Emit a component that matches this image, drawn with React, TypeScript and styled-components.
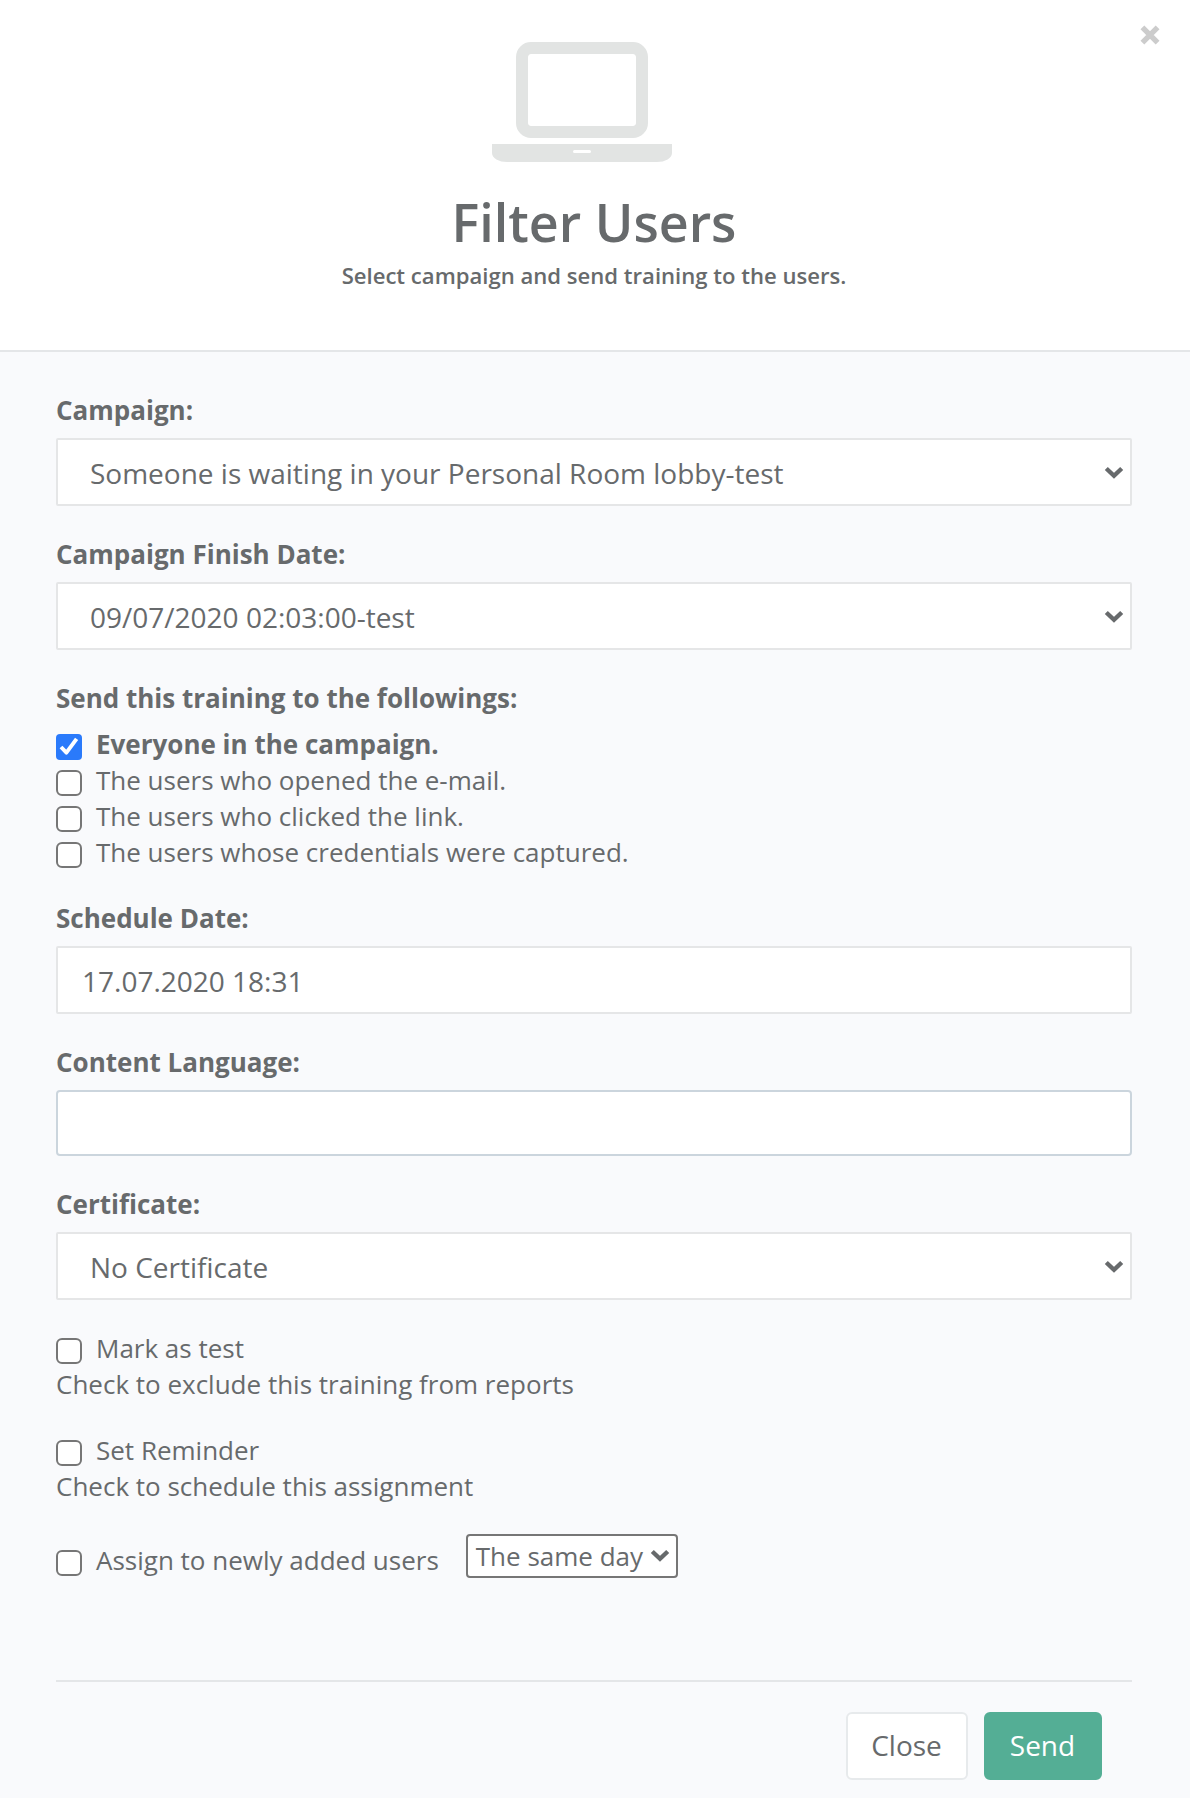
import React from "react";
import styled, { createGlobalStyle, css } from "styled-components";

const GlobalStyle = createGlobalStyle`
  * { box-sizing: border-box; }
  body {
    margin: 0;
    background: #f9fafc;
    color: #676a6c;
    font-family: "Open Sans", "Noto Sans", sans-serif;
    font-size: 26px;
    line-height: 36px;
  }
`;

const Modal = styled.div`
  position: relative;
  width: 1190px;
  height: 1798px;
  overflow: hidden;
  display: flex;
  flex-direction: column;
  background: #f9fafc;
`;

const Dismiss = styled.button`
  position: absolute;
  top: 25px;
  right: 30px;
  width: 20px;
  height: 20px;
  padding: 0;
  border: 0;
  background: none;
  svg { display: block; }
`;

const Header = styled.header`
  height: 352px;
  flex: none;
  padding-top: 18px;
  display: flex;
  flex-direction: column;
  align-items: center;
  background: #fff;
  border-bottom: 2px solid #e4e6e8;
`;

const LaptopIcon = styled.svg`
  display: block;
  width: 180px;
  height: 144px;
  margin-right: 26px;
  fill: #e2e4e3;
`;

const Title = styled.h4`
  margin: 24px 2px 0 0;
  font-size: 52px;
  font-weight: 600;
  line-height: 72px;
`;

const Subtitle = styled.small`
  margin: 1px 2px 0 0;
  font-size: 22.1px;
  font-weight: 600;
  line-height: 32px;
`;

const Body = styled.form`
  flex: 1;
  padding: 40px 58px 0 56px;
  display: flex;
  flex-direction: column;
`;

const Group = styled.section`
  margin-bottom: 30px;
`;

const Label = styled.div`
  margin-bottom: 10px;
  font-weight: 700;
`;

const Control = styled.div<{ $kind?: "select" | "text" | "tags" }>`
  height: 68px;
  display: flex;
  align-items: center;
  justify-content: space-between;
  padding: 2px 6px 0 ${(p) => (p.$kind === "text" ? 24 : 32)}px;
  background: #fff;
  border: 2px solid #e5e6e7;
  border-radius: 2px;
  font-size: 28px;
  line-height: 38px;
  ${(p) =>
    p.$kind === "tags" &&
    css`
      height: 66px;
      border-color: #cbd5dd;
      border-radius: 4px;
    `}
`;

const Arrow = styled.svg`
  display: block;
  flex: none;
  width: 20px;
  height: 14px;
  fill: none;
  stroke: #676a6c;
  stroke-width: 4.4;
`;

const CheckRow = styled.label<{ $bold?: boolean }>`
  height: 36px;
  display: flex;
  align-items: flex-start;
  gap: 14px;
  font-weight: ${(p) => (p.$bold ? 700 : 400)};
`;

const Box = styled.span<{ $on?: boolean }>`
  flex: none;
  width: 26px;
  height: 26px;
  margin-top: 8px;
  display: flex;
  align-items: center;
  justify-content: center;
  border-radius: ${(p) => (p.$on ? 4 : 6)}px;
  border: ${(p) => (p.$on ? "0" : "2px solid #767676")};
  background: ${(p) => (p.$on ? "#2a7afb" : "#fff")};
`;

const AssignRow = styled.div`
  display: flex;
  align-items: flex-end;
  gap: 27px;
`;

const SmallSelect = styled.div`
  width: 212px;
  height: 44px;
  display: flex;
  align-items: center;
  justify-content: space-between;
  padding: 0 6px 0 8px;
  background: #fff;
  border: 2px solid #767676;
  border-radius: 4px;
  line-height: 36px;
`;

const Footer = styled.footer`
  margin-top: 72px;
  padding: 30px 30px 0;
  display: flex;
  justify-content: flex-end;
  gap: 16px;
  border-top: 2px solid #e4e6e8;
`;

const Button = styled.button<{ $primary?: boolean }>`
  width: ${(p) => (p.$primary ? 118 : 122)}px;
  height: 68px;
  padding: 0 1px 2px 0;
  border: 2px solid ${(p) => (p.$primary ? "#54ae95" : "#e7eaec")};
  border-radius: 6px;
  background: ${(p) => (p.$primary ? "#54ae95" : "#fff")};
  color: ${(p) => (p.$primary ? "#fff" : "inherit")};
  font-family: inherit;
  font-size: 28px;
  line-height: 38px;
`;

function Chevron() {
  return (
    <Arrow viewBox="0 0 20 14">
      <path d="M2.3 2.500 10 9.800 17.700 2.500" />
    </Arrow>
  );
}

function Select({ label, value }: { label: string; value: string }) {
  return (
    <Group>
      <Label>{label}</Label>
      <Control $kind="select">
        <span>{value}</span>
        <Chevron />
      </Control>
    </Group>
  );
}

function Check({ text, on }: { text: string; on?: boolean }) {
  return (
    <CheckRow $bold={on}>
      <Box $on={on}>
        {on && (
          <svg width="26" height="26" viewBox="0 0 26 26" fill="none" stroke="#fff" strokeWidth="3.900">
            <path d="M5 13 10.400 18.600 20.600 4.900" strokeLinejoin="round" strokeLinecap="butt" />
          </svg>
        )}
      </Box>
      <span>{text}</span>
    </CheckRow>
  );
}

export default function App() {
  return (
    <>
      <GlobalStyle />
      <Modal>
        <Header>
          <LaptopIcon viewBox="0 0 1920 1536">
            <path d="M416 1280q-66 0-113-47t-47-113v-704q0-66 47-113t113-47h1088q66 0 113 47t47 113v704q0 66-47 113t-113 47h-1088zM384 416v704q0 13 9.500 22.500t22.500 9.500h1088q13 0 22.500-9.500t9.500-22.500v-704q0-13-9.500-22.500t-22.500-9.500h-1088q-13 0-22.500 9.500t-9.500 22.500zM1760 1344h160v96q0 40-47 68t-113 28h-1600q-66 0-113-28t-47-68v-96h1760zM1040 1440q16 0 16-16t-16-16h-160q-16 0-16 16t16 16h160z" />
          </LaptopIcon>
          <Title>Filter Users</Title>
          <Subtitle>Select campaign and send training to the users.</Subtitle>
        </Header>
        <Dismiss type="button" aria-label="Dismiss">
          <svg width="20" height="20" viewBox="0 0 20 20" stroke="#ccc" strokeWidth="5.400">
            <path d="M2.400 2.400 17.600 17.600M17.600 2.400 2.400 17.600" />
          </svg>
        </Dismiss>
        <Body>
          <Select label="Campaign:" value="Someone is waiting in your Personal Room lobby-test" />
          <Select label="Campaign Finish Date:" value="09/07/2020 02:03:00-test" />
          <Group>
            <Label>Send this training to the followings:</Label>
            <Check text="Everyone in the campaign." on />
            <Check text="The users who opened the e-mail." />
            <Check text="The users who clicked the link." />
            <Check text="The users whose credentials were captured." />
          </Group>
          <Group>
            <Label>Schedule Date:</Label>
            <Control $kind="text">17.07.2020 18:31</Control>
          </Group>
          <Group>
            <Label>Content Language:</Label>
            <Control $kind="tags" />
          </Group>
          <Select label="Certificate:" value="No Certificate" />
          <Group>
            <Check text="Mark as test" />
            <div>Check to exclude this training from reports</div>
          </Group>
          <Group>
            <Check text="Set Reminder" />
            <div>Check to schedule this assignment</div>
          </Group>
          <Group>
            <AssignRow>
              <Check text="Assign to newly added users" />
              <SmallSelect>
                <span>The same day</span>
                <Chevron />
              </SmallSelect>
            </AssignRow>
          </Group>
          <Footer>
            <Button type="button">Close</Button>
            <Button type="button" $primary>Send</Button>
          </Footer>
        </Body>
      </Modal>
    </>
  );
}
